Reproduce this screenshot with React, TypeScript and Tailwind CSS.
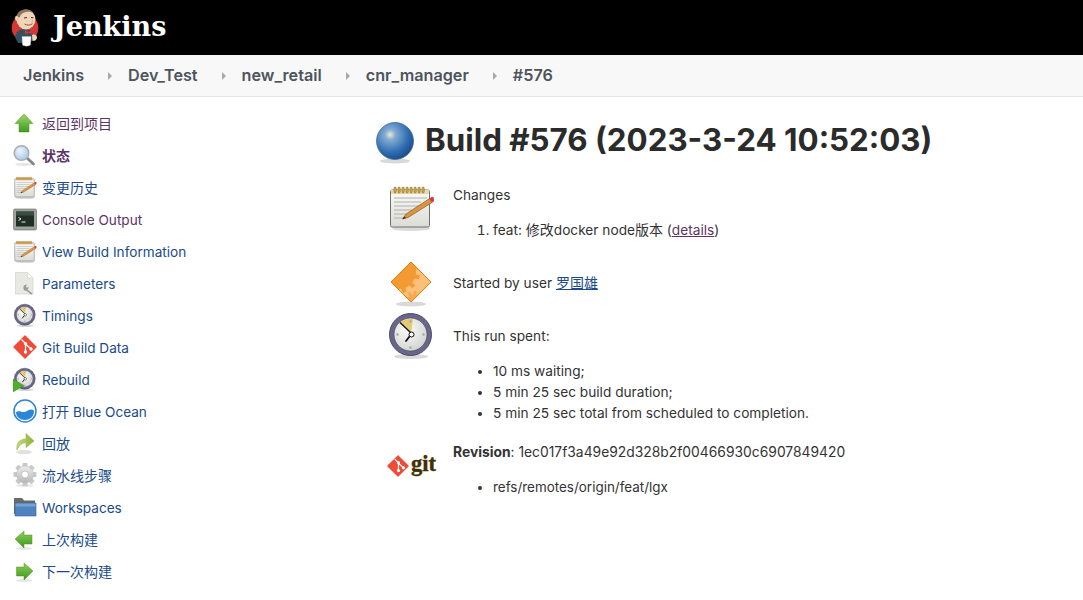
import React from "react";

const SANS = "font-['Inter','Noto_Sans_CJK_SC',sans-serif]";

type IconProps = { className?: string };

const Shadow = ({ cy = 45, rx = 17 }: { cy?: number; rx?: number }) => (
  <ellipse cx="24" cy={cy} rx={rx} ry="2.5" fill="#000" opacity="0.15" />
);

const ButlerLogo = () => (
  <svg viewBox="0 0 28 38" className="w-[28px] h-[38px]">
    <circle cx="14" cy="19" r="13.300" fill="#d33833" />
    <path d="M4 28c1-5 4-8 9-8s8 2 9 6l1 4-5 4H7z" fill="#335061" />
    <ellipse cx="15" cy="10.500" rx="9.500" ry="10" fill="#f0d6b7" />
    <path d="M5.500 12c-1.500-1-2-3-1-4.500 1.200-1.500 2.500-.5 3 .5-.5 1.500-.7 3-2 4z" fill="#f0d6b7" stroke="#c59a80" strokeWidth=".4" />
    <path d="M6 7c0-4 4-6.500 9-6.500 3.500 0 6.500 1.500 8 4-2.500-1.500-5-2-7.500-1.500-3 .5-6 2-6.500 5-.5.800-1.500 0-3-1z" fill="#8d7664" />
    <path d="M13 9l3-.5M20 8.500l2.500.3" stroke="#49312a" strokeWidth="1" fill="none" />
    <path d="M13.500 15c2.500 1.500 5.500 1.500 8-.3" stroke="#a5483f" strokeWidth="1" fill="none" />
    <path d="M21 10c1.500 1 2.500 2.500 1.500 3.500h-2z" fill="#eab8a0" />
    <path d="M14 21l3.500 2 4-1.800v3.800l-4-1-3.500 1.500z" fill="#d33833" />
    <path d="M11 27.500h9l-.5 8.500c-2 1.500-6 1.500-8 0z" fill="#fff" stroke="#bbb" strokeWidth=".3" />
    <path d="M21 26c2.500-1 5 0 5 2.500s-2 3.500-4.500 3.500z" fill="#f0d6b7" />
  </svg>
);

const UpArrow = ({ className }: IconProps) => (
  <svg viewBox="0 0 24 24" className={className}>
    <defs>
      <linearGradient id="ga-up" x1="0" y1="0" x2="0" y2="1">
        <stop offset="0" stopColor="#9fd867" />
        <stop offset="1" stopColor="#3f9a22" />
      </linearGradient>
    </defs>
    <path d="M11 3l9 9.500h-4v8.500H6v-8.500H2z" fill="url(#ga-up)" stroke="#4e9a06" strokeWidth=".5" />
  </svg>
);

const SideArrow = ({ className, flip }: IconProps & { flip?: boolean }) => (
  <svg viewBox="0 0 24 24" className={className}>
    <defs>
      <linearGradient id="ga-side" x1="0" y1="0" x2="0" y2="1">
        <stop offset="0" stopColor="#8fd05a" />
        <stop offset="1" stopColor="#3b9420" />
      </linearGradient>
    </defs>
    <ellipse cx="11" cy="21.500" rx="8" ry="1.500" fill="#000" opacity=".1" />
    <path
      d={flip ? "M20 12l-9-8v4H3.500v9H11v4z" : "M2 12l9-8v4h8v9h-8v4z"}
      fill="url(#ga-side)"
      stroke="#4e9a06"
      strokeWidth=".5"
    />
  </svg>
);

const Magnifier = ({ className }: IconProps) => (
  <svg viewBox="0 0 24 24" className={className}>
    <defs>
      <radialGradient id="ga-lens" cx=".4" cy=".35" r=".7">
        <stop offset="0" stopColor="#f0f6fc" />
        <stop offset="1" stopColor="#a4c6e6" />
      </radialGradient>
    </defs>
    <ellipse cx="11" cy="21.500" rx="9" ry="1.500" fill="#000" opacity=".1" />
    <path d="M14 15l6.500 6" stroke="#858585" strokeWidth="2.800" strokeLinecap="round" />
    <circle cx="8.500" cy="10" r="7.300" fill="url(#ga-lens)" stroke="#a9aeb3" strokeWidth="1.500" />
  </svg>
);

const Notepad = ({ className }: IconProps) => (
  <svg viewBox="0 0 48 48" className={className}>
    <defs>
      <linearGradient id="ga-pad" x1="0" y1="0" x2="0" y2="1">
        <stop offset="0" stopColor="#fbfbf7" />
        <stop offset="1" stopColor="#dcdcd6" />
      </linearGradient>
    </defs>
    <Shadow cy={45.500} rx={19} />
    <rect x="3.500" y="7" width="39" height="37" rx="1.500" fill="url(#ga-pad)" stroke="#6f6f6f" />
    <rect x="4" y="7" width="38" height="4" fill="#e8d8ac" />
    {[8, 12, 16, 20, 24, 28, 32, 36].map((x) => (
      <rect key={x} x={x - 1} y="4" width="2.200" height="6" rx="1.100" fill="#d4ac4a" stroke="#7a5c1a" strokeWidth=".5" />
    ))}
    {[15, 19, 23, 27, 31, 35].map((y, i) => (
      <path key={y} d={`M7 ${y}h${i < 1 ? 33 : i < 3 ? 27 : i < 4 ? 18 : 12}`} stroke="#a8a8a8" strokeWidth=".9" />
    ))}
    <path d="M19 31l-3.500 5 5.500-1.500 24-15-2.500-4z" fill="#d9953f" stroke="#7b4f16" strokeWidth=".6" />
    <path d="M42.500 15.500l2.500 4 2-1.300-.3-3.700-1.700-.8z" fill="#e0323a" />
    <path d="M15.500 36l1.800-2.600 1.800 1.500z" fill="#3a2a14" />
  </svg>
);

const Terminal = ({ className }: IconProps) => (
  <svg viewBox="0 0 24 24" className={className}>
    <rect x=".5" y="2" width="23" height="21" rx="1.500" fill="#a0a29c" stroke="#666" strokeWidth=".6" />
    <rect x="3" y="4.500" width="18" height="15" fill="#1f2f27" />
    <rect x="3" y="4.500" width="18" height="4" fill="#3a4f42" />
    <path d="M5.500 10.500l2.500 1.500-2.500 1.500" stroke="#e8efe8" strokeWidth="1" fill="none" />
    <path d="M8.500 15h4" stroke="#e8efe8" strokeWidth="1" />
    <rect x="16" y="21" width="2" height="1" fill="#7ac943" />
  </svg>
);

const DocWrench = ({ className }: IconProps) => (
  <svg viewBox="0 0 24 24" className={className}>
    <path d="M2.500 1.500h12l5.500 5.500v16h-17.500z" fill="#e9e9e3" stroke="#cdcdc5" strokeWidth=".6" />
    <path d="M14.500 1.500v5.500h5.500z" fill="#fafaf8" stroke="#cdcdc5" strokeWidth=".5" />
    <path d="M10.500 15.500c.5-1.500 2.300-2 3.500-1.500l-1.200 1.500 1 1.200 1.700-.7c.2 1-.2 2-1 2.500l5 4-1 1.200-5-4c-1.800.7-3.700-1-3-4.200z" fill="#9b9b98" />
  </svg>
);

const Clock = ({ className }: IconProps) => (
  <svg viewBox="0 0 48 48" className={className}>
    <defs>
      <radialGradient id="ga-face" cx=".4" cy=".35" r=".75">
        <stop offset="0" stopColor="#fbfbfa" />
        <stop offset="1" stopColor="#cfcfcb" />
      </radialGradient>
    </defs>
    <Shadow cy={45.500} rx={17} />
    <circle cx="23.500" cy="23.500" r="21" fill="#69668c" stroke="#4b4a66" strokeWidth="1" />
    <circle cx="23.500" cy="23.500" r="16.500" fill="url(#ga-face)" stroke="#3f3e55" strokeWidth=".6" />
    <path d="M24 22L13 11.500C16 9 20 7.500 26 8z" fill="#e3c565" opacity=".9" />
    <path d="M24 22L13 11.500" stroke="#111" strokeWidth="1.400" />
    <path d="M24 23.500L19 30" stroke="#111" strokeWidth="1.800" strokeLinecap="round" />
    <circle cx="24.500" cy="23.500" r="2.500" fill="#fff" stroke="#111" strokeWidth="1" />
    {[[23.500, 10.500], [36.500, 23.500], [23.500, 36.500], [10.500, 23.500]].map(([x, y]) => (
      <circle key={`${x}-${y}`} cx={x} cy={y} r="1.300" fill="#aaa" />
    ))}
  </svg>
);

const Rebuild = ({ className }: IconProps) => (
  <span className={`relative block ${className}`}>
    <Clock className="w-6 h-6" />
    <svg viewBox="0 0 12 14" className="absolute left-0 top-[12px] w-[11px] h-[13px]">
      <path d="M0 0l12 7-12 7z" fill="#4fb02a" stroke="#39841b" strokeWidth=".5" />
    </svg>
  </span>
);

const GitDiamond = ({ className }: IconProps) => (
  <svg viewBox="0 0 24 24" className={className}>
    <path d="M1 12L12 1l11 11-11 11z" fill="#ee4b38" stroke="#ee4b38" strokeWidth="1.400" strokeLinejoin="round" />
    <path d="M8.500 4.500l4 4M12.500 8.500V17M12.500 9l5.500 5" stroke="#fff" strokeWidth="1.300" fill="none" />
    <circle cx="12.500" cy="8.500" r="1.600" fill="#fff" />
    <circle cx="12.500" cy="17" r="1.700" fill="#fff" />
    <circle cx="18" cy="14" r="1.700" fill="#fff" />
  </svg>
);

const BlueOcean = ({ className }: IconProps) => (
  <svg viewBox="0 0 24 24" className={className}>
    <circle cx="12" cy="12" r="11" fill="#fff" stroke="#2d85d8" strokeWidth="1.500" />
    <path d="M3 13.500c3-3 6.500 1 10-1 3-1.500 5-3 8-1 .5 5-3.500 9.500-9 9.500-5 0-9-3.500-9-7.500z" fill="#2d85d8" />
  </svg>
);

const Replay = ({ className }: IconProps) => (
  <svg viewBox="0 0 24 24" className={className}>
    <defs>
      <linearGradient id="ga-replay" x1="0" y1="0" x2="1" y2="0">
        <stop offset="0" stopColor="#c8d975" />
        <stop offset="1" stopColor="#93b33c" />
      </linearGradient>
    </defs>
    <ellipse cx="11" cy="21" rx="8" ry="2" fill="#000" opacity=".12" />
    <path d="M4 19c-1-6 2-11 9-11V2.500l8 7.500-8 6.500v-5c-4 0-7 3-9 7.500z" fill="url(#ga-replay)" stroke="#8aa53a" strokeWidth=".5" />
  </svg>
);

const Gear = ({ className }: IconProps) => (
  <svg viewBox="0 0 24 24" className={className}>
    <defs>
      <linearGradient id="ga-gear" x1="0" y1="0" x2="0" y2="1">
        <stop offset="0" stopColor="#eeeeee" />
        <stop offset="1" stopColor="#b5b5b5" />
      </linearGradient>
    </defs>
    <ellipse cx="12" cy="22.500" rx="9" ry="1.500" fill="#000" opacity=".1" />
    <g transform="translate(12 11.500)">
      {[0, 45, 90, 135].map((a) => (
        <rect key={a} x="-2.500" y="-11.500" width="5" height="23" rx="1" fill="#c9c9c9" transform={`rotate(${a})`} />
      ))}
      <circle r="8.500" fill="url(#ga-gear)" stroke="#bbb" strokeWidth=".5" />
      <circle r="3.500" fill="#fff" stroke="#aaa" strokeWidth=".6" />
    </g>
  </svg>
);

const Folder = ({ className }: IconProps) => (
  <svg viewBox="0 0 24 24" className={className}>
    <path d="M1 3h8l2 2.500h11V19H1z" fill="#6a6a68" />
    <path d="M2 8h21v13H2z" fill="#4e83c0" stroke="#35639c" strokeWidth=".6" />
    <path d="M2.500 8.500h20v3h-20z" fill="#76a3d6" />
  </svg>
);

const BlueBall = ({ className }: IconProps) => (
  <svg viewBox="0 0 40 46" className={className}>
    <defs>
      <radialGradient id="ga-ball" cx=".37" cy=".33" r=".7">
        <stop offset="0" stopColor="#e9edc9" />
        <stop offset=".2" stopColor="#84acd4" />
        <stop offset=".7" stopColor="#2d6cb0" />
        <stop offset="1" stopColor="#204a87" />
      </radialGradient>
    </defs>
    <ellipse cx="20" cy="43" rx="15" ry="2.500" fill="#000" opacity=".15" />
    <circle cx="20" cy="23" r="18.500" fill="url(#ga-ball)" stroke="#3c6ea5" strokeWidth=".8" />
  </svg>
);

const GEAR_TEETH = [0, 30, 60, 90, 120, 150];

const OrangeDiamond = ({ className }: IconProps) => (
  <svg viewBox="0 0 48 48" className={className}>
    <defs>
      <clipPath id="ga-diamond">
        <path d="M24 3l20 20-20 20L4 23z" />
      </clipPath>
    </defs>
    <Shadow cy={45} rx={15} />
    <path d="M24 3l20 20-20 20L4 23z" fill="#fcc078" />
    <g clipPath="url(#ga-diamond)">
      <g transform="translate(12 13)" fill="#f39a32">
        <circle r="17" />
        {GEAR_TEETH.map((a) => (
          <rect key={a} x="-2" y="-21" width="4" height="42" transform={`rotate(${a + 15})`} />
        ))}
      </g>
      <g transform="translate(28 44)" fill="#f7a950">
        <circle r="9" />
        {GEAR_TEETH.map((a) => (
          <rect key={a} x="-1.500" y="-12" width="3" height="24" transform={`rotate(${a})`} />
        ))}
      </g>
    </g>
    <path d="M24 3l20 20-20 20L4 23z" fill="none" stroke="#f57900" strokeWidth="1" />
  </svg>
);

const GitLogo = () => (
  <div className="flex items-center">
    <GitDiamond className="w-[22px] h-[22px] shrink-0" />
    <span className="font-['Liberation_Serif',serif] font-bold text-[22.5px] leading-none text-[#413000] [-webkit-text-stroke:0.4px_#413000] ml-[2px] -mt-[3px]">
      git
    </span>
  </div>
);

type SideItem = { label: React.ReactNode; key: string; icon: React.ReactNode; tone: "blue" | "purple"; bold?: boolean; latin?: boolean };

const icon = "w-6 h-6";

const sideItems: SideItem[] = [
  { key: "back", label: "返回到项目", icon: <UpArrow className={icon} />, tone: "purple" },
  { key: "status", label: "状态", icon: <Magnifier className={icon} />, tone: "purple", bold: true },
  { key: "changes", label: "变更历史", icon: <Notepad className={icon} />, tone: "blue" },
  { key: "console", label: "Console Output", icon: <Terminal className={icon} />, tone: "purple", latin: true },
  { key: "info", label: "View Build Information", icon: <Notepad className={icon} />, tone: "blue", latin: true },
  { key: "params", label: "Parameters", icon: <DocWrench className={icon} />, tone: "blue", latin: true },
  { key: "timings", label: "Timings", icon: <Clock className={icon} />, tone: "blue", latin: true },
  { key: "git", label: "Git Build Data", icon: <GitDiamond className={icon} />, tone: "blue", latin: true },
  { key: "rebuild", label: "Rebuild", icon: <Rebuild className={icon} />, tone: "blue", latin: true },
  {
    key: "ocean",
    label: (
      <>
        打开 <span className="text-[13.6px]">Blue Ocean</span>
      </>
    ),
    icon: <BlueOcean className={icon} />,
    tone: "blue",
    latin: true,
  },
  { key: "replay", label: "回放", icon: <Replay className={icon} />, tone: "blue" },
  { key: "steps", label: "流水线步骤", icon: <Gear className={icon} />, tone: "blue" },
  { key: "ws", label: "Workspaces", icon: <Folder className={icon} />, tone: "blue", latin: true },
  { key: "prev", label: "上次构建", icon: <SideArrow className={icon} />, tone: "blue" },
  { key: "next", label: "下一次构建", icon: <SideArrow className={icon} flip />, tone: "blue" },
];

const crumbs = ["Jenkins", "Dev_Test", "new_retail", "cnr_manager", "#576"];

const spent = ["10 ms waiting;", "5 min 25 sec build duration;", "5 min 25 sec total from scheduled to completion."];

const App: React.FC = () => {
  return (
    <div className={`${SANS} h-[600px] overflow-hidden bg-white text-[14px] leading-[21px] text-[#333]`}>
      <header className="h-[55px] bg-black flex items-center pl-[11px]">
        <ButlerLogo />
        <span className="ml-[14px] -mt-[3px] font-['DejaVu_Serif',serif] font-bold text-[27px] text-white">Jenkins</span>
      </header>

      <nav className="h-[42px] bg-[#f8f8f8] border-b border-[#e4e6e7] flex items-center pl-[23px] text-[16.2px] font-semibold text-[#4d545d]">
        {crumbs.map((c, i) => (
          <React.Fragment key={c}>
            {i > 0 && <span className="ml-[24px] mr-[16px] w-0 h-0 border-y-[4px] border-y-transparent border-l-[4px] border-l-[#a8a8a8]" />}
            <a>{c}</a>
          </React.Fragment>
        ))}
      </nav>

      <div className="flex">
        <aside className="w-[375px] shrink-0 pt-[10px] pl-[13px]">
          {sideItems.map((item) => (
            <div key={item.key} className="h-8 flex items-center">
              <span className="w-[29px] shrink-0">{item.icon}</span>
              <a
                className={`${item.tone === "purple" ? "text-[#5c3566]" : "text-[#204a87]"} ${item.bold ? "font-bold" : ""} ${
                  item.latin ? "text-[13.6px] pt-[2px]" : ""
                }`}
              >
                {item.label}
              </a>
            </div>
          ))}
        </aside>

        <main className="flex-1 text-[13.7px]">
          <div className="flex items-center pt-[21px]">
            <BlueBall className="w-[40px] h-[46px]" />
            <h1 className="ml-[10px] -mt-[2px] text-[31.3px] leading-[40px] font-bold text-[#2b2b2b]">Build #576 (2023-3-24 10:52:03)</h1>
          </div>

          <div className="mt-[19px] flex pl-[12px]">
            <Notepad className="w-12 h-12 shrink-0" />
            <div className="ml-[18px] pt-[2px]">
              <p>Changes</p>
              <ol className="mt-[13px] ml-[40px] list-decimal">
                <li>
                  feat: <span className="text-[14px]">修改</span>docker node<span className="text-[14px]">版本</span> (
                  <a className="underline text-[#5c3566]">details</a>)
                </li>
              </ol>
            </div>
          </div>

          <div className="mt-[18px] flex items-center pl-[12px]">
            <OrangeDiamond className="w-12 h-12 shrink-0" />
            <p className="ml-[18px]">
              Started by user <a className="underline text-[#204a87] text-[14px]">罗国雄</a>
            </p>
          </div>

          <div className="mt-[4px] flex pl-[12px]">
            <Clock className="w-12 h-12 shrink-0" />
            <div className="ml-[18px] pt-[15px]">
              <p>This run spent:</p>
              <ul className="mt-[14px] ml-[40px] list-disc">
                {spent.map((s) => (
                  <li key={s}>{s}</li>
                ))}
              </ul>
            </div>
          </div>

          <div className="mt-[18px] flex pl-[12px]">
            <div className="w-12 shrink-0 pt-[13px]">
              <GitLogo />
            </div>
            <div className="ml-[18px]">
              <p>
                <b className="text-[13.85px]">Revision</b>: <span className="text-[13.85px]">1ec017f3a49e92d328b2f00466930c6907849420</span>
              </p>
              <ul className="mt-[14px] ml-[40px] list-disc">
                <li className="text-[13.45px]">refs/remotes/origin/feat/lgx</li>
              </ul>
            </div>
          </div>
        </main>
      </div>
    </div>
  );
};

export default App;
